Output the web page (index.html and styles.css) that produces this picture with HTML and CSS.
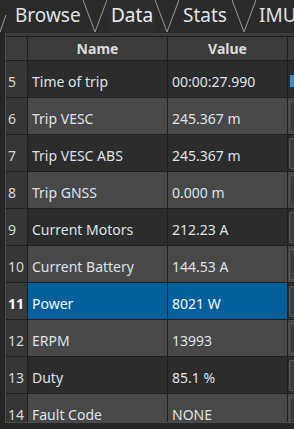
FILE: index.html
```html
<!DOCTYPE html>
<html lang="en">
<head>
    <meta charset="UTF-8">
    <title>VESC Data</title>
    <meta name="viewport" content="width=device-width, initial-scale=1.0">
    <link rel="stylesheet" href="styles.css">
</head>
<body>
    <!-- Tab bar -->
    <div class="tabs">
        <svg class="sep sep-first" width="7" height="33" viewBox="0 0 7 33"><polyline points="0,32 6,15" /></svg>
        <div class="tab tab-browse">Browse</div>
        <svg class="sep" width="24" height="33" viewBox="0 0 24 33"><polyline points="0,0 12,32 24,0" /></svg>
        <div class="tab tab-data active">Data</div>
        <svg class="sep" width="24" height="33" viewBox="0 0 24 33"><polyline points="0,0 12,32 24,0" /></svg>
        <div class="tab tab-stats">Stats</div>
        <svg class="sep" width="24" height="33" viewBox="0 0 24 33"><polyline points="0,0 12,32 24,0" /></svg>
        <div class="tab tab-imu">IMU</div>
    </div>

    <!-- Data table -->
    <div class="panel">
        <table class="grid">
            <colgroup>
                <col class="c-num">
                <col class="c-name">
                <col class="c-value">
                <col class="c-extra">
            </colgroup>
            <thead>
                <tr>
                    <th></th>
                    <th>Name</th>
                    <th>Value</th>
                    <th></th>
                </tr>
            </thead>
            <tbody>
                <tr class="odd">
                    <td class="num">5</td><td>Time of trip</td><td>00:00:27.990</td><td class="extra"><span class="mark"></span></td>
                </tr>
                <tr class="even">
                    <td class="num">6</td><td>Trip VESC</td><td>245.367 m</td><td class="extra"><span class="bar"></span></td>
                </tr>
                <tr class="odd">
                    <td class="num">7</td><td>Trip VESC ABS</td><td>245.367 m</td><td class="extra"><span class="bar"></span></td>
                </tr>
                <tr class="even">
                    <td class="num">8</td><td>Trip GNSS</td><td>0.000 m</td><td class="extra"><span class="bar"></span></td>
                </tr>
                <tr class="odd">
                    <td class="num">9</td><td>Current Motors</td><td>212.23 A</td><td class="extra"><span class="bar"></span></td>
                </tr>
                <tr class="even">
                    <td class="num">10</td><td>Current Battery</td><td>144.53 A</td><td class="extra"><span class="bar"></span></td>
                </tr>
                <tr class="selected">
                    <td class="num">11</td><td>Power</td><td>8021 W</td><td class="extra"><span class="bar"></span></td>
                </tr>
                <tr class="even">
                    <td class="num">12</td><td>ERPM</td><td>13993</td><td class="extra"><span class="bar"></span></td>
                </tr>
                <tr class="odd">
                    <td class="num">13</td><td>Duty</td><td>85.1 %</td><td class="extra"><span class="bar"></span></td>
                </tr>
                <tr class="even">
                    <td class="num">14</td><td>Fault Code</td><td>NONE</td><td class="extra"><span class="bar"></span></td>
                </tr>
            </tbody>
        </table>
    </div>
</body>
</html>
```

FILE: styles.css
```css
/* ====== Base ====== */
body {
    margin: 0;
    background: #262626;
    font-family: 'Noto Sans', 'Open Sans', sans-serif;
    color: #dde2e8;
    overflow: hidden;
    width: 294px;
    height: 429px;
}

/* ====== Tabs ====== */
.tabs {
    display: flex;
    height: 33px;
    background: #2a2a2a;
    white-space: nowrap;
    overflow: hidden;
}
.tab {
    flex: none;
    box-sizing: border-box;
    height: 33px;
    line-height: 30px;
    font-size: 19px;
    color: #dfe3e8;
}
.tab-browse { width: 76px; padding-left: 8px; }
.tab-data { width: 48px; padding-left: 4px; }
.tab-stats { width: 53px; padding-left: 4px; }
.tab-imu { padding-left: 3px; }
.tab.active {
    background: #2d2d2d;
    color: #e6ecf2;
}
.sep {
    flex: none;
    display: block;
}
.sep polyline {
    fill: none;
    stroke: #9a9a9a;
    stroke-width: 1;
}

/* ====== Panel / frame ====== */
.panel {
    margin-left: 5px;
    height: 386px;
    border-top: 1px solid #3f3f3f;
    border-left: 1px solid #4c4c4c;
    border-bottom: 1px solid #4c4c4c;
    padding-top: 2px;
    background: #3a3a3a;
    overflow: hidden;
}

/* ====== Grid ====== */
.grid {
    border-collapse: separate;
    border-spacing: 0;
    table-layout: fixed;
    width: 340px;
    border-top: 1px solid #1f1f1f;
    font-size: 14px;
}
.c-num { width: 22px; }
.c-name { width: 140px; }
.c-value { width: 120px; }
.c-extra { width: 58px; }

.grid th,
.grid td {
    border-right: 1px solid #1f1f1f;
    border-bottom: 1px solid #1f1f1f;
    padding: 0;
    overflow: hidden;
    white-space: nowrap;
}
.grid th {
    height: 23px;
    background: #3b3b3b;
    font-weight: 700;
    color: #dcdcdc;
    text-align: center;
}
.grid td {
    height: 37px;
    padding: 4px 0 0 4px;
    box-sizing: border-box;
}
.grid td.num {
    padding-left: 2px;
    background: #363636;
    color: #d4d9df;
}
.odd td { background: #2c2c2c; }
.even td { background: #484848; }
.selected td { background: #03609b; color: #f2f6fa; }
.selected td.num {
    background: #3a3a3a;
    color: #ffffff;
    font-weight: 700;
}
.grid td.extra {
    padding: 0 0 0 1px;
}
.selected td.extra { background: #2c2c2c; }

/* third column contents */
.bar {
    display: block;
    height: 29px;
    margin-top: 1px;
    border: 1px solid #5a5a5a;
    border-radius: 2px;
    background: #3c3c3c;
}
.mark {
    display: block;
    width: 4px;
    height: 12px;
    margin: 3px 0 0 1px;
    background: #3a8fd0;
}
```
